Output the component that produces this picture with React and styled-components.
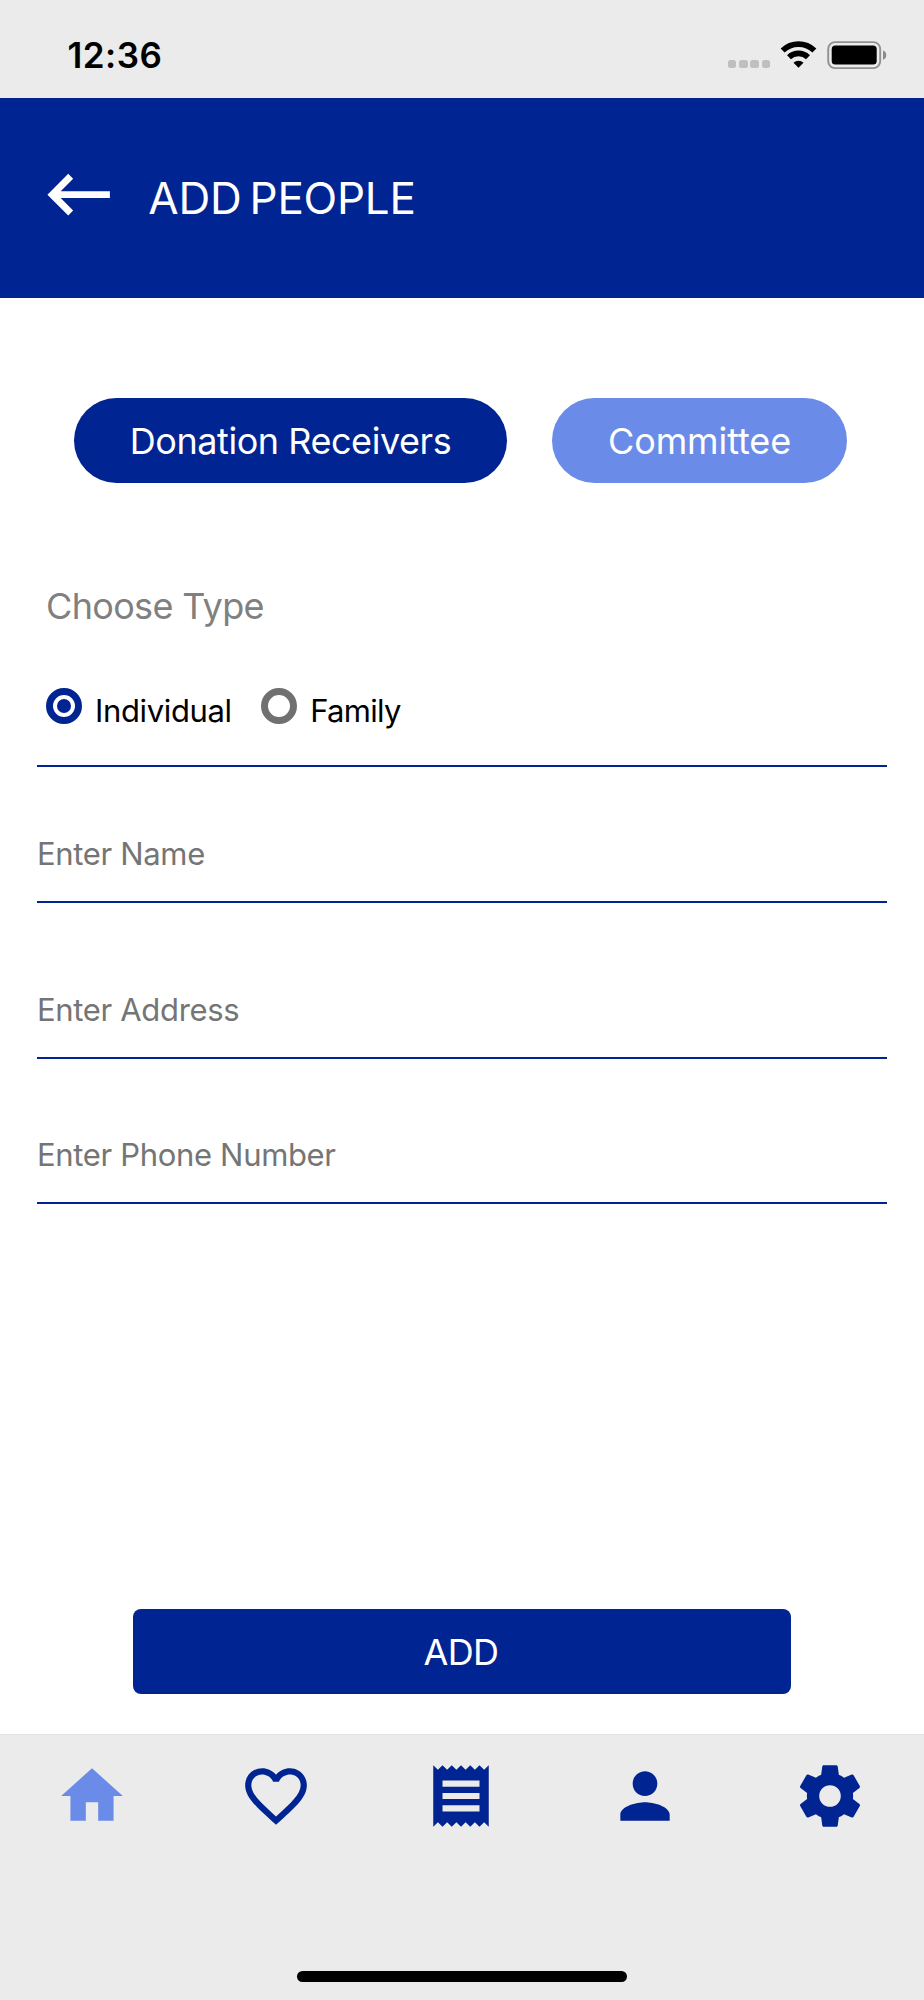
import styled, { createGlobalStyle } from 'styled-components';
import { MdKeyboardBackspace, MdHome, MdFavoriteBorder, MdReceipt, MdPerson } from 'react-icons/md';

const navy = '#002491';
const lightBlue = '#6a8ce8';
const barGrey = '#ebebeb';

const GlobalStyle = createGlobalStyle`
  * {
    box-sizing: border-box;
  }

  body {
    margin: 0;
    background: #fff;
    font-family: Inter, 'Liberation Sans', sans-serif;
  }

  button {
    border: none;
    padding: 0;
    font-family: inherit;
    background: none;
  }

  svg {
    display: block;
    flex-shrink: 0;
  }
`;

const Screen = styled.div`
  display: flex;
  flex-direction: column;
  width: 924px;
  height: 2000px;
  overflow: hidden;
`;

const StatusBar = styled.div`
  display: flex;
  justify-content: space-between;
  align-items: center;
  height: 98px;
  padding: 12px 36.5px 0 67.5px;
  background-color: ${barGrey};
`;

const Time = styled.span`
  font-size: 35px;
  font-weight: 600;
  letter-spacing: 0.5px;
  color: #000;
`;

const StatusIcons = styled.div`
  display: flex;
  align-items: flex-end;
  height: 28px;
`;

const SignalDots = styled.div`
  display: flex;
  gap: 2.8px;
  margin: 0 10px 1px 0;
`;

const Dot = styled.span`
  width: 8.4px;
  height: 8.4px;
  border-radius: 2.5px;
  background-color: #bfbfbf;
`;

const WifiIcon = styled.svg`
  margin: 0 9.5px 1px 0;
`;

const Header = styled.header`
  display: flex;
  align-items: center;
  gap: 28.5px;
  height: 200px;
  padding-left: 36.5px;
  background-color: ${navy};
  color: #fff;
`;

const BackButton = styled.button`
  margin-top: -7px;
  color: #fff;
`;

const Title = styled.h1`
  margin: 0;
  font-size: 44px;
  font-weight: 400;
  letter-spacing: -0.25px;
  word-spacing: -4px;
`;

const Content = styled.main`
  display: flex;
  flex-direction: column;
  flex: 1;
  padding: 100px 37px 40px;
`;

const Tabs = styled.div`
  display: flex;
  gap: 45px;
  padding-left: 37px;
`;

const Pill = styled.button`
  width: ${(props) => props.$width}px;
  height: 85px;
  border-radius: 43px;
  background-color: ${(props) => (props.$active ? navy : lightBlue)};
  color: #fff;
  font-size: 36px;
  letter-spacing: ${(props) => (props.$active ? -0.45 : -0.1)}px;
`;

const TypeGroup = styled.div`
  margin-top: 101px;
  padding-left: 9px;
  height: 183px;
  border-bottom: 2px solid ${navy};
`;

const GroupLabel = styled.div`
  font-size: 36px;
  line-height: 44px;
  letter-spacing: -0.66px;
  color: #808080;
`;

const Options = styled.div`
  display: flex;
  gap: 29.5px;
  margin-top: 60px;
`;

const Option = styled.label`
  display: flex;
  gap: 13px;
  font-size: 31px;
  line-height: 46px;
  letter-spacing: ${(props) => props.$spacing}px;
  color: #000;
`;

const Radio = styled.span`
  display: flex;
  align-items: center;
  justify-content: center;
  width: 36px;
  height: 36px;
  border: 7px solid ${(props) => (props.$checked ? navy : '#707070')};
  border-radius: 50%;

  &::after {
    content: '';
    width: 14px;
    height: 14px;
    border-radius: 50%;
    background-color: ${(props) => (props.$checked ? navy : 'transparent')};
  }
`;

const Field = styled.div`
  margin-top: ${(props) => props.$top}px;
  height: 69px;
  border-bottom: 2px solid ${navy};
  font-size: 31px;
  line-height: 40px;
  letter-spacing: -0.33px;
  color: #757575;
`;

const AddButton = styled.button`
  align-self: center;
  width: 658px;
  height: 85px;
  margin-top: auto;
  padding-right: 2px;
  border-radius: 8px;
  background-color: ${navy};
  color: #fff;
  font-size: 36px;
  letter-spacing: -0.66px;
`;

const TabBar = styled.nav`
  display: flex;
  flex-direction: column;
  justify-content: space-between;
  height: 266px;
  padding: 24px 0 18px;
  border-top: 1px solid #e2e2e2;
  background-color: ${barGrey};
`;

const TabItems = styled.div`
  display: flex;
  margin: 0 2px 0 -0.2px;
`;

const TabItem = styled.button`
  display: flex;
  flex: 1;
  justify-content: center;
  color: ${(props) => (props.$active ? lightBlue : navy)};
`;

const HomeIndicator = styled.div`
  align-self: center;
  width: 330px;
  height: 11px;
  border-radius: 6px;
  background-color: #000;
`;

const Wifi = () => (
  <WifiIcon width="37" height="27" viewBox="0 0 37 27">
    <g fill="none" stroke="#000" strokeWidth="5.6">
      <path d="M2.6 9.6a22.8 22.8 0 0 1 31.8 0" />
      <path d="M9 16.2a13.6 13.6 0 0 1 19 0" />
    </g>
    <path d="M18.5 26.8l-5-5.1a7.2 7.2 0 0 1 10 0z" />
  </WifiIcon>
);

const Battery = () => (
  <svg width="61" height="28" viewBox="0 0 61 28">
    <rect x="1.2" y="1.1" width="52" height="26" rx="6.8" fill="none" stroke="#919191" strokeWidth="1.9" />
    <rect x="4.7" y="4.6" width="45" height="19" rx="3.6" />
    <path d="M56 9.4a5 5 0 0 1 0 9.4z" fill="#8a8a8a" />
  </svg>
);

const SettingsIcon = ({ size }) => (
  <svg width={size} height={size} viewBox="0 0 24 24" fill="currentColor">
    <path d="M12 15.5A3.5 3.5 0 0 1 8.5 12 3.5 3.5 0 0 1 12 8.5a3.5 3.5 0 0 1 3.5 3.5 3.5 3.5 0 0 1-3.5 3.5m7.43-2.53c.04-.32.07-.64.07-.97s-.03-.66-.07-1l2.11-1.63c.19-.15.24-.42.12-.64l-2-3.46c-.12-.22-.39-.31-.61-.22l-2.49 1c-.52-.39-1.06-.73-1.69-.98l-.37-2.65A.506.506 0 0 0 14 2h-4c-.25 0-.46.18-.5.42l-.37 2.65c-.63.25-1.17.59-1.69.98l-2.49-1c-.22-.09-.49 0-.61.22l-2 3.46c-.13.22-.07.49.12.64L4.57 11c-.04.34-.07.67-.07 1s.03.65.07.97l-2.11 1.66c-.19.15-.25.42-.12.64l2 3.46c.12.22.39.3.61.22l2.49-1.01c.52.4 1.06.74 1.69.99l.37 2.65c.04.24.25.42.5.42h4c.25 0 .46-.18.5-.42l.37-2.65c.63-.26 1.17-.59 1.69-.99l2.49 1.01c.22.08.49 0 .61-.22l2-3.46c.12-.22.07-.49-.12-.64z" />
  </svg>
);

const navItems = [
  { name: 'home', Icon: MdHome },
  { name: 'favorites', Icon: MdFavoriteBorder },
  { name: 'receipts', Icon: MdReceipt },
  { name: 'people', Icon: MdPerson },
  { name: 'settings', Icon: SettingsIcon },
];

const App = () => {
  return (
    <Screen>
      <GlobalStyle />
      <StatusBar>
        <Time>12:36</Time>
        <StatusIcons>
          <SignalDots>
            <Dot />
            <Dot />
            <Dot />
            <Dot />
          </SignalDots>
          <Wifi />
          <Battery />
        </StatusIcons>
      </StatusBar>

      <Header>
        <BackButton>
          <MdKeyboardBackspace size={83.3} />
        </BackButton>
        <Title>ADD PEOPLE</Title>
      </Header>

      <Content>
        <Tabs>
          <Pill $active $width={433}>Donation Receivers</Pill>
          <Pill $width={295}>Committee</Pill>
        </Tabs>

        <TypeGroup>
          <GroupLabel>Choose Type</GroupLabel>
          <Options>
            <Option $spacing={-0.36}>
              <Radio $checked />
              Individual
            </Option>
            <Option $spacing={-0.7}>
              <Radio />
              Family
            </Option>
          </Options>
        </TypeGroup>

        <Field $top={67}>Enter Name</Field>
        <Field $top={87}>Enter Address</Field>
        <Field $top={76}>Enter Phone Number</Field>

        <AddButton>ADD</AddButton>
      </Content>

      <TabBar>
        <TabItems>
          {navItems.map(({ name, Icon }) => (
            <TabItem key={name} $active={name === 'home'}>
              <Icon size={74} />
            </TabItem>
          ))}
        </TabItems>
        <HomeIndicator />
      </TabBar>
    </Screen>
  );
};

export default App;
